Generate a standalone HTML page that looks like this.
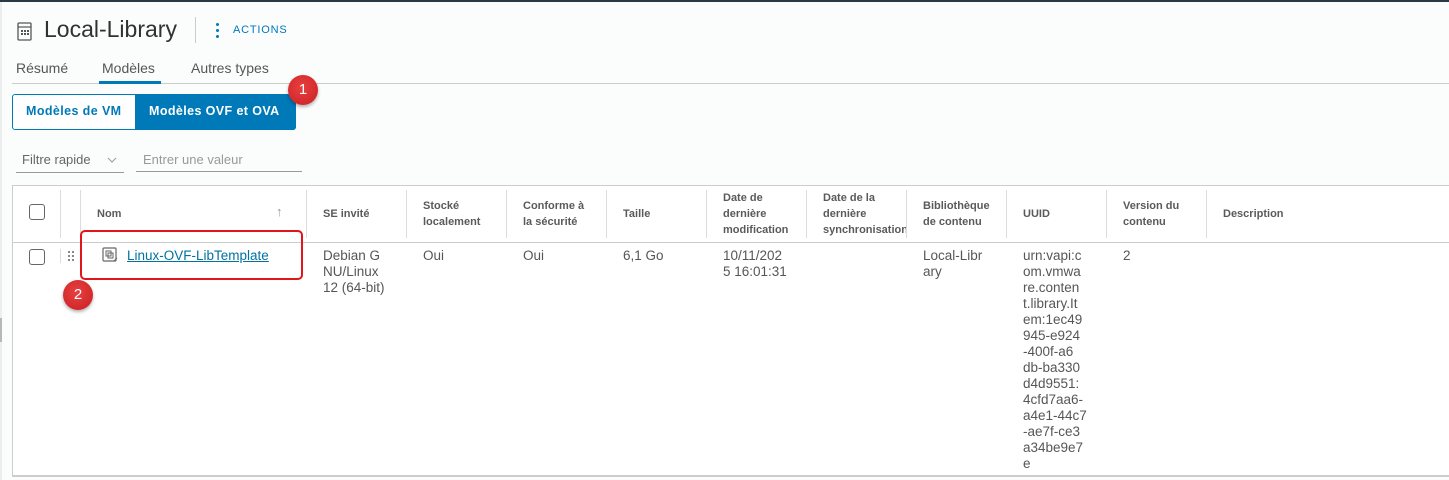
<!DOCTYPE html>
<html><head><meta charset="utf-8"><style>
*{margin:0;padding:0;box-sizing:border-box}
body{width:1449px;height:480px;overflow:hidden;background:#fbfcfc;font-family:"Liberation Sans",sans-serif;position:relative;color:#565656}
.a{position:absolute;white-space:nowrap}
.h{font-size:11px;font-weight:bold;color:#5a5a5a;line-height:16px}
.b{font-size:13.5px;line-height:16px;color:#565656}
.sep{position:absolute;top:190px;width:1px;height:48px;background:#dcdcdc}
.badge{position:absolute;width:30px;height:30px;border-radius:50%;background:radial-gradient(circle at 45% 40%,#e8403f,#c91f24);color:#fff;font-size:15px;text-align:center;line-height:30px;box-shadow:0 2px 3px rgba(0,0,0,.3)}
</style></head><body>
<div class="a" style="left:0;top:0;width:1449px;height:2px;background:#2a3a44"></div>
<div class="a" style="left:0;top:2px;width:2px;height:478px;background:#eceeee"></div>
<div class="a" style="left:0;top:318px;width:2px;height:24px;background:#b8b8b8"></div>
<svg class="a" style="left:17px;top:22px" width="16" height="20" viewBox="0 0 16 20"><rect x="1" y="1" width="13" height="17" rx="1" fill="none" stroke="#555" stroke-width="1.3"/><line x1="1" y1="5" x2="14" y2="5" stroke="#555" stroke-width="1.2"/><g fill="#555"><rect x="4" y="8" width="2" height="2"/><rect x="7" y="8" width="2" height="2"/><rect x="10" y="8" width="2" height="2"/><rect x="4" y="11" width="2" height="2"/><rect x="7" y="11" width="2" height="2"/><rect x="10" y="11" width="2" height="2"/></g></svg>
<div class="a" style="left:44px;top:16px;font-size:23px;color:#313131">Local-Library</div>
<div class="a" style="left:195px;top:17px;width:1px;height:26px;background:#ccc"></div>
<div class="a" style="left:216px;top:23px;width:3px;height:3px;border-radius:50%;background:#0079b8;box-shadow:0 6px 0 #0079b8,0 12px 0 #0079b8"></div>
<div class="a" style="left:233px;top:24px;font-size:11px;color:#0079b8;letter-spacing:.8px">ACTIONS</div>
<div class="a" style="left:16px;top:60px;font-size:14px;color:#565656">Résumé</div>
<div class="a" style="left:102px;top:60px;font-size:14px;color:#565656">Modèles</div>
<div class="a" style="left:191px;top:60px;font-size:14px;color:#565656">Autres types</div>
<div class="a" style="left:12px;top:83px;width:1437px;height:1px;background:#ccc"></div>
<div class="a" style="left:99px;top:81px;width:62px;height:3px;background:#0079b8"></div>
<div class="a" style="left:12px;top:94px;width:284px;height:36px;border:1px solid #0079b8;border-radius:3px;background:#fff"></div>
<div class="a" style="left:135px;top:94px;width:161px;height:36px;background:#0079b8;border-radius:0 3px 3px 0"></div>
<div class="a" style="left:26px;top:104px;font-size:12.5px;font-weight:bold;color:#0079b8;letter-spacing:.4px">Modèles de VM</div>
<div class="a" style="left:149px;top:104px;font-size:12.5px;font-weight:bold;color:#fff;letter-spacing:.4px">Modèles OVF et OVA</div>
<div class="badge" style="left:288px;top:75px">1</div>
<div class="a" style="left:22px;top:152px;font-size:13px;color:#666">Filtre rapide</div>
<svg class="a" style="left:107px;top:156px" width="10" height="8"><path d="M1 2 L5 6 L9 2" fill="none" stroke="#999" stroke-width="1"/></svg>
<div class="a" style="left:16px;top:172px;width:108px;height:1px;background:#999"></div>
<div class="a" style="left:143px;top:152px;font-size:13px;color:#999">Entrer une valeur</div>
<div class="a" style="left:136px;top:171px;width:166px;height:1px;background:#999"></div>
<div class="a" style="left:12px;top:185px;width:1440px;height:292px;border:1px solid #ccc;border-right:none;background:#fff"></div>
<div class="a" style="left:13px;top:475px;width:1436px;height:2px;background:#ccc"></div>
<div class="a" style="left:13px;top:242px;width:1436px;height:1px;background:#ccc"></div>
<div class="sep" style="left:60px"></div><div class="sep" style="left:80px"></div><div class="sep" style="left:306px"></div><div class="sep" style="left:406px"></div><div class="sep" style="left:506px"></div><div class="sep" style="left:606px"></div><div class="sep" style="left:706px"></div><div class="sep" style="left:806px"></div><div class="sep" style="left:906px"></div><div class="sep" style="left:1006px"></div><div class="sep" style="left:1106px"></div><div class="sep" style="left:1206px"></div>
<div class="a" style="left:29px;top:204px;width:16px;height:16px;border:1px solid #666;border-radius:3px"></div>
<div class="a h" style="left:97px;top:206px">Nom</div>
<div class="a" style="left:276px;top:204px;font-size:13px;color:#999">↑</div>
<div class="a h" style="left:323px;top:206px">SE invité</div>
<div class="a h" style="left:423px;top:198px">Stocké<br>localement</div>
<div class="a h" style="left:523px;top:198px">Conforme à<br>la sécurité</div>
<div class="a h" style="left:623px;top:206px">Taille</div>
<div class="a h" style="left:723px;top:190px">Date de<br>dernière<br>modification</div>
<div class="a h" style="left:823px;top:190px;width:83px;overflow:hidden">Date de la<br>dernière<br>synchronisation</div>
<div class="a h" style="left:923px;top:198px">Bibliothèque<br>de contenu</div>
<div class="a h" style="left:1023px;top:206px">UUID</div>
<div class="a h" style="left:1123px;top:198px">Version du<br>contenu</div>
<div class="a h" style="left:1223px;top:206px">Description</div>
<div class="a" style="left:29px;top:249px;width:16px;height:16px;border:1px solid #666;border-radius:3px"></div>
<div class="a" style="left:60px;top:249px;width:1px;height:14px;background:#ddd"></div>
<svg class="a" style="left:68px;top:250px" width="8" height="12"><g fill="#888"><rect x="0" y="1" width="2" height="2"/><rect x="4" y="1" width="2" height="2"/><rect x="0" y="5" width="2" height="2"/><rect x="4" y="5" width="2" height="2"/><rect x="0" y="9" width="2" height="2"/><rect x="4" y="9" width="2" height="2"/></g></svg>
<svg class="a" style="left:102px;top:247px" width="16" height="16" viewBox="0 0 16 16"><rect x="1" y="1" width="13" height="13" rx="1" fill="none" stroke="#666" stroke-width="1.2"/><rect x="4" y="4" width="5" height="5" fill="none" stroke="#666"/><rect x="6" y="6" width="5" height="5" fill="none" stroke="#666"/><path d="M12 14 L15 11" stroke="#666"/></svg>
<div class="a b" style="left:127px;top:248px;color:#0072a3;text-decoration:underline">Linux-OVF-LibTemplate</div>
<div class="a" style="left:80px;top:230px;width:223px;height:50px;border:2px solid #e0161b;border-radius:5px"></div>
<div class="badge" style="left:63px;top:280px">2</div>
<div class="a b" style="left:323px;top:248px">Debian G<br>NU/Linux<br>12 (64-bit)</div>
<div class="a b" style="left:423px;top:248px">Oui</div>
<div class="a b" style="left:523px;top:248px">Oui</div>
<div class="a b" style="left:623px;top:248px">6,1 Go</div>
<div class="a b" style="left:723px;top:248px">10/11/202<br>5 16:01:31</div>
<div class="a b" style="left:923px;top:248px">Local-Libr<br>ary</div>
<div class="a b" style="left:1023px;top:248px">urn:vapi:c<br>om.vmwa<br>re.conten<br>t.library.It<br>em:1ec49<br>945-e924<br>-400f-a6<br>db-ba330<br>d4d9551:<br>4cfd7aa6-<br>a4e1-44c7<br>-ae7f-ce3<br>a34be9e7<br>e</div>
<div class="a b" style="left:1123px;top:248px">2</div>
</body></html>
